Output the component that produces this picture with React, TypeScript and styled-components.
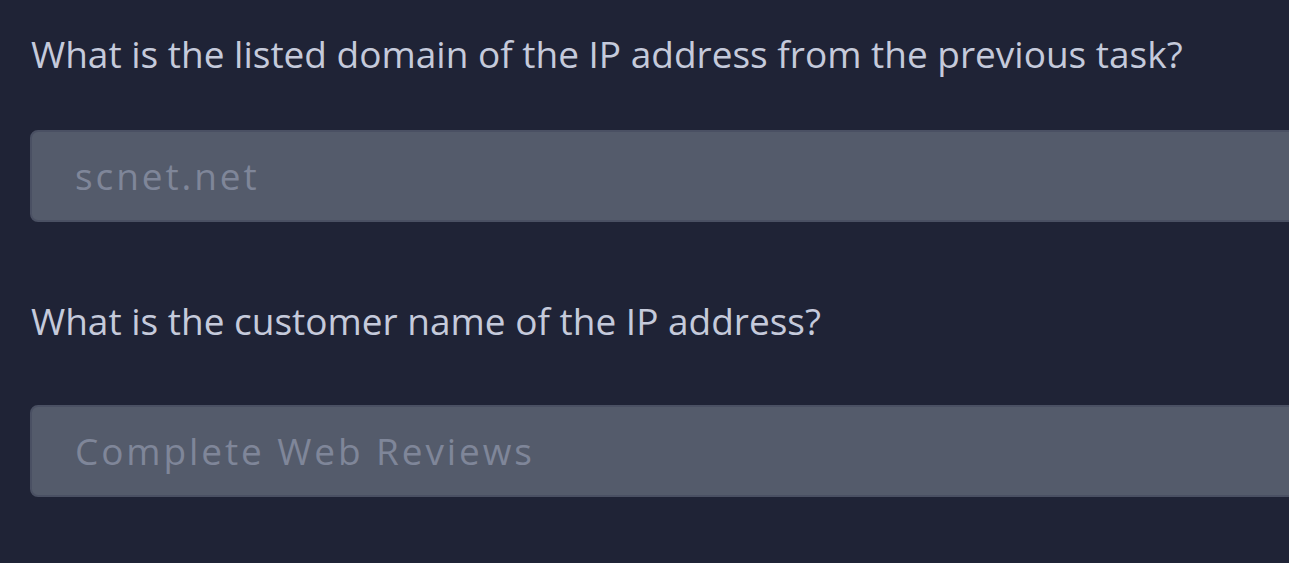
import styled, { createGlobalStyle } from "styled-components"

const GlobalStyle = createGlobalStyle`
  html, body {
    margin: 0;
    padding: 0;
    background-color: #1f2336;
    overflow: hidden;
  }
  * {
    box-sizing: border-box;
  }
`

const Page = styled.div`
  width: 100vw;
  height: 100vh;
  background-color: #1f2336;
  overflow: hidden;
  padding: 29px 0 0 30px;
  font-family: "Open Sans", "Noto Sans", sans-serif;
`

const Form = styled.div`
  width: 1320px;
  display: flex;
  flex-direction: column;
`

const Question = styled.label<{ $gap: number }>`
  display: block;
  color: #c5cadb;
  font-size: 37px;
  line-height: 50px;
  margin: 0 0 ${(p) => p.$gap}px 1px;
`

const Answer = styled.div`
  height: 92px;
  display: flex;
  align-items: center;
  padding: 0 0 2px 43px;
  margin-bottom: 74px;
  background-color: #545b6b;
  border: 2px solid #4a5063;
  border-radius: 8px;
  color: #7f8699;
  font-size: 37px;
  letter-spacing: 2.9px;
`

const items = [
  { q: "What is the listed domain of the IP address from the previous task?", a: "scnet.net", gap: 51 },
  { q: "What is the customer name of the IP address?", a: "Complete Web Reviews", gap: 59 },
]

function App() {
  return (
    <>
      <GlobalStyle />
      <Page>
        <Form>
          {items.map((item) => (
            <div key={item.q}>
              <Question $gap={item.gap}>{item.q}</Question>
              <Answer>{item.a}</Answer>
            </div>
          ))}
        </Form>
      </Page>
    </>
  )
}

export default App
